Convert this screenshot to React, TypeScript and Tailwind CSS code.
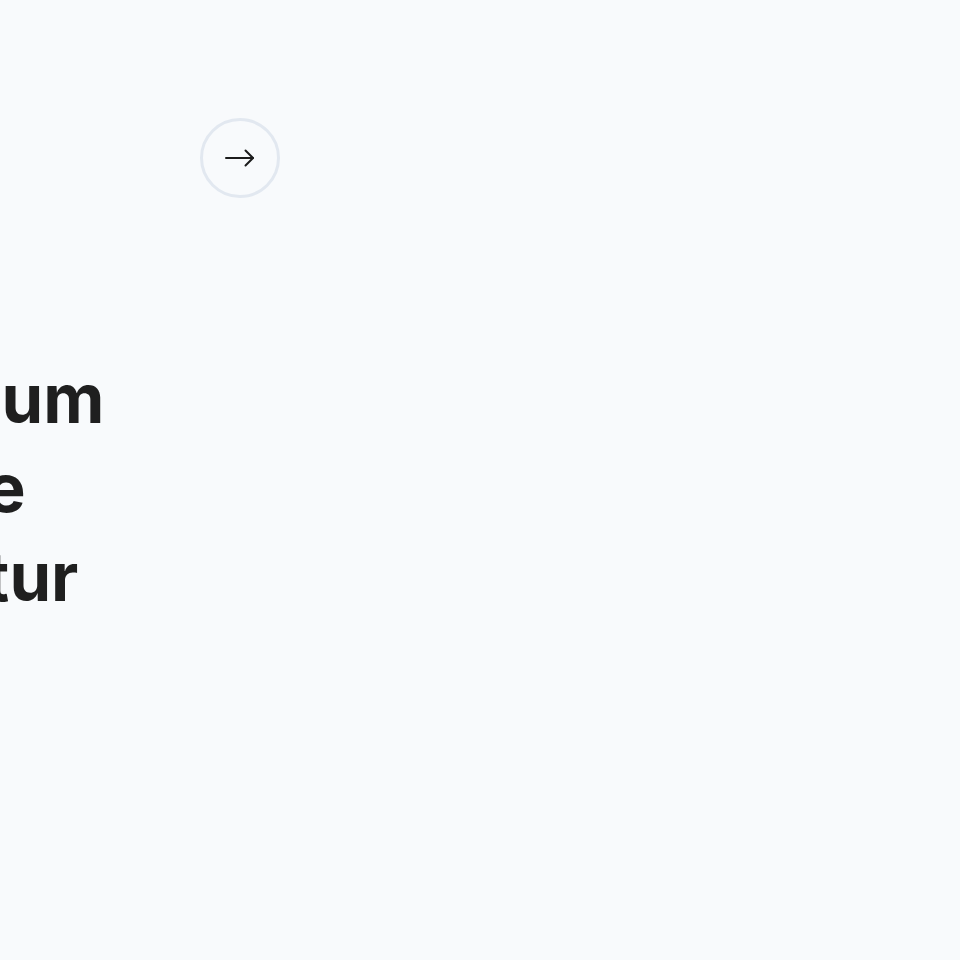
import React from 'react'

function ArrowIcon() {
  return (
    <svg width="30" height="18" viewBox="0 0 30 18" fill="none" stroke="#1c1c1c" strokeWidth="2" strokeLinecap="round" strokeLinejoin="round">
      <path d="M1 9h27" />
      <path d="M20.5 1.5 28 9l-7.5 7.5" />
    </svg>
  )
}

export default function App() {
  const lines = ['Lorem ipsum', 'sed dolore', 'consectetur']
  return (
    <main className="min-h-[960px] w-full overflow-hidden bg-[#f8fafc] font-['Inter',sans-serif] text-[#1f1f1f]">
      <div className="pl-[200px] pt-[118px]">
        <button
          type="button"
          className="flex h-[80px] w-[80px] items-center justify-center rounded-full border-[3px] border-[#e2e8f0]"
        >
          <ArrowIcon />
        </button>
      </div>
      <h1 className="ml-[-318px] mt-[156px] text-[67px] font-bold leading-[89px]">
        {lines.map((line, i) => (
          <div key={i} className="whitespace-nowrap">{line}</div>
        ))}
      </h1>
    </main>
  )
}
